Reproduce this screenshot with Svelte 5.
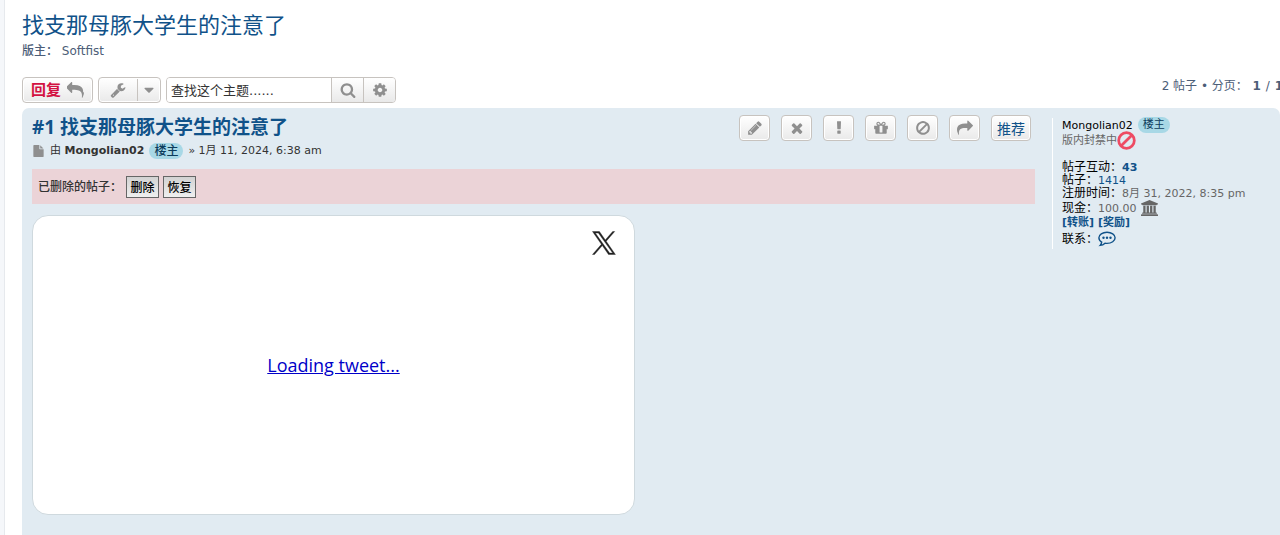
<script>
  const icons = {
    reply: 'M1792 1120q0 166-127 451-3 7-10.5 24t-13.5 30-13 22q-12 17-28 17-15 0-23.5-10t-8.5-25q0-9 2.5-26.5t2.5-23.5q5-68 5-123 0-112-19.5-200.5t-54-153.5-89-112-117.5-79.5-150.5-49.5-173-26.5-200.5-7.5h-224v256q0 26-19 45t-45 19-45-19l-512-512q-19-19-19-45t19-45l512-512q19-19 45-19t45 19 19 45v256h224q713 0 875 403 53 134 53 333z',
    wrench: 'M448 1472q0-26-19-45t-45-19-45 19-19 45 19 45 45 19 45-19 19-45zm644-420l-682 682q-37 37-90 37-52 0-91-37l-106-108q-38-36-38-90 0-53 38-91l681-681q39 98 114.5 173.5t173.5 114.5zm634-435q0 39-23 106-47 134-164.5 217.5t-258.5 83.5q-185 0-316.5-131.5t-131.5-316.5 131.5-316.5 316.5-131.5q58 0 121.5 16.5t107.5 46.5q16 11 16 28t-16 28l-293 169v224l193 107q5-3 79-48.5t135.5-81 70.5-35.5q15 0 23.5 10t8.5 25z',
    caret: 'M1408 704q0 26-19 45l-448 448q-19 19-45 19t-45-19l-448-448q-19-19-19-45t19-45 45-19h896q26 0 45 19t19 45z',
    search: 'M1216 832q0-185-131.5-316.5t-316.5-131.5-316.5 131.5-131.5 316.5 131.5 316.5 316.5 131.5 316.5-131.5 131.5-316.5zm512 832q0 52-38 90t-90 38q-54 0-90-38l-343-342q-179 124-399 124-143 0-273.5-55.5t-225-150-150-225-55.5-273.5 55.5-273.5 150-225 225-150 273.5-55.5 273.5 55.5 225 150 150 225 55.5 273.5q0 220-124 399l343 343q37 37 37 90z',
    cog: 'M1152 896q0-106-75-181t-181-75-181 75-75 181 75 181 181 75 181-75 75-181zm512-109v222q0 12-8 23t-20 13l-185 28q-19 54-39 91 35 50 107 138 10 12 10 25t-9 23q-27 37-99 108t-94 71q-12 0-26-9l-138-108q-44 23-91 38-16 136-29 186-7 28-36 28h-222q-14 0-24.5-8.5t-11.5-21.5l-28-184q-49-16-90-37l-141 107q-10 9-25 9-14 0-25-11-126-114-165-168-7-10-7-23 0-12 8-23 15-21 51-66.5t54-70.5q-27-50-41-99l-183-27q-13-2-21-12.5t-8-23.5v-222q0-12 8-23t19-13l186-28q14-46 39-92-40-57-107-138-10-12-10-24 0-10 9-23 26-36 98.5-107.5t94.5-71.5q13 0 26 10l138 107q44-23 91-38 16-136 29-186 7-28 36-28h222q14 0 24.5 8.5t11.5 21.5l28 184q49 16 90 37l142-107q9-9 24-9 13 0 25 10 129 119 165 170 7 8 7 22 0 12-8 23-15 21-51 66.5t-54 70.5q26 50 41 98l183 28q13 2 21 12.5t8 23.5z',
    pencil: 'M491 1536l91-91-235-235-91 91v107h128v128h107zm523-928q0-22-22-22-10 0-17 7l-542 542q-7 7-7 17 0 22 22 22 10 0 17-7l542-542q7-7 7-17zm-54-192l416 416-832 832h-416v-416zm683 96q0 53-37 90l-166 166-416-416 166-165q36-38 90-38 53 0 91 38l235 234q37 39 37 91z',
    times: 'M1490 1322q0 40-28 68l-136 136q-28 28-68 28t-68-28l-294-294-294 294q-28 28-68 28t-68-28l-136-136q-28-28-28-68t28-68l294-294-294-294q-28-28-28-68t28-68l136-136q28-28 68-28t68 28l294 294 294-294q28-28 68-28t68 28l136 136q28 28 28 68t-28 68l-294 294 294 294q28 28 28 68z',
    exclamation: 'M1088 1248v224q0 26-19 45t-45 19h-256q-26 0-45-19t-19-45v-224q0-26 19-45t45-19h256q26 0 45 19t19 45zm30-1056l-28 768q-1 26-20.5 45t-45.5 19h-256q-26 0-45.5-19t-20.5-45l-28-768q-1-26 17.5-45t44.5-19h320q26 0 44.5 19t17.5 45z',
    gift: 'M1056 1356v-716h-320v716q0 25 18 38.5t46 13.5h192q28 0 46-13.5t18-38.5zm-456-844h195l-126-161q-26-31-69-31-40 0-68 28t-28 68 28 68 68 28zm688-96q0-40-28-68t-68-28q-43 0-69 31l-125 161h194q40 0 68-28t28-68zm376 256v320q0 14-9 23t-23 9h-96v416q0 40-28 68t-68 28h-1088q-40 0-68-28t-28-68v-416h-96q-14 0-23-9t-9-23v-320q0-14 9-23t23-9h440q-93 0-158.5-65.5t-65.5-158.5 65.5-158.5 158.5-65.5q107 0 168 77l128 165 128-165q61-77 168-77 93 0 158.5 65.5t65.5 158.5-65.5 158.5-158.5 65.5h440q14 0 23 9t9 23z',
    ban: 'M1440 893q0-161-87-295l-754 753q137 89 297 89 111 0 211.5-43.5t173.5-116.5 116-174.5 43-212.5zm-999 299l755-754q-135-91-300-91-148 0-273 73t-198 199-73 274q0 162 89 299zm1223-299q0 157-61 300t-163.5 246-245 164-298.5 61-298.5-61-245-164-163.5-246-61-300 61-299.5 163.5-245.5 245-164 298.5-61 298.5 61 245 164 163.5 245.5 61 299.5z',
    share: 'M1792 640q0 26-19 45l-512 512q-19 19-45 19t-45-19-19-45v-256h-224q-98 0-175.5 6t-154 21.5-133 42.5-105.5 69.5-80 101-48.5 138.5-17.5 181q0 55 5 123 0 6 2.5 23.5t2.5 26.5q0 15-8.5 25t-23.5 10q-16 0-28-17-7-9-13-22t-13.5-30-10.5-24q-127-285-127-451 0-199 53-333 162-403 875-403h224v-256q0-26 19-45t45-19 45 19l512 512q19 19 19 45z',
    file: 'M1152 512v-472q22 14 36 28l408 408q14 14 28 36h-472zm-128 32q0 40 28 68t68 28h544v1056q0 40-28 68t-68 28h-1344q-40 0-68-28t-28-68v-1600q0-40 28-68t68-28h800v544z'
  };

  const postButtons = [
    { icon: 'pencil', title: '编辑帖子' },
    { icon: 'times', title: '删除帖子' },
    { icon: 'exclamation', title: '举报帖子' },
    { icon: 'gift', title: '奖励' },
    { icon: 'ban', title: '封禁' },
    { icon: 'share', title: '引用' }
  ];

  let query = $state('');
</script>

{#snippet icon(name)}
  <svg class="icon" viewBox="0 0 1792 1792" aria-hidden="true"><path d={icons[name]} /></svg>
{/snippet}

<div class="wrap">
  <h2><a href="#topic">找支那母豚大学生的注意了</a></h2>
  <p class="moderators"><strong>版主：</strong> <a href="#softfist">Softfist</a></p>

  <div class="action-bar">
    <button class="button reply">回复 {@render icon('reply')}</button>
    <button class="button tools" aria-label="主题工具">
      <span class="tool-icon">{@render icon('wrench')}</span>
      <span class="caret">{@render icon('caret')}</span>
    </button>
    <form class="search-box" onsubmit={(e) => e.preventDefault()}>
      <input type="search" placeholder="查找这个主题......" aria-label="查找这个主题" bind:value={query} />
      <button class="search-button" aria-label="搜索">{@render icon('search')}</button>
      <button class="search-button cog" type="button" aria-label="高级搜索">{@render icon('cog')}</button>
    </form>
    <div class="pagination">2 帖子 • 分页： <strong>1</strong> / <strong>1</strong></div>
  </div>

  <article class="post">
    <div class="postbody">
      <header>
        <div class="heading">
          <h3><a href="#p1">#1 找支那母豚大学生的注意了</a></h3>
          <p class="author">
            {@render icon('file')}
            <span>由 <strong>Mongolian02</strong></span>
            <span class="op">楼主</span>
            <span>» 1月 11, 2024, 6:38 am</span>
          </p>
        </div>
        <div class="post-buttons">
          {#each postButtons as item}
            <button class="button" aria-label={item.title}>{@render icon(item.icon)}</button>
          {/each}
          <button class="button recommend">推荐</button>
        </div>
      </header>

      <div class="deleted">
        <strong>已删除的帖子：</strong>
        <button>删除</button>
        <button>恢复</button>
      </div>

      <div class="tweet">
        <svg class="x-logo" viewBox="0 0 24 24" aria-hidden="true">
          <path d="M14.2 10.2 22.7 0.5h-2l-7.4 8.4L7.4 0.5H0.5l8.9 12.8L0.5 23.5h2l7.8-8.9 6.2 8.9h6.9zM3.3 2h3.1l14.3 20.1h-3.1z" />
        </svg>
        <a href="#tweet">Loading tweet...</a>
      </div>
    </div>

    <aside class="profile">
      <div class="user"><a href="#user">Mongolian02</a> <span class="op">楼主</span></div>
      <div class="rank">
        版内封禁中
        <svg viewBox="0 0 18 18" aria-hidden="true">
          <circle cx="9" cy="9" r="7.4" />
          <path d="M4 14 14 4" />
        </svg>
      </div>
      <dl>
        <div><dt>帖子互动：</dt><dd><a href="#likes"><strong>43</strong></a></dd></div>
        <div><dt>帖子：</dt><dd><a href="#posts">1414</a></dd></div>
        <div><dt>注册时间：</dt><dd>8月 31, 2022, 8:35 pm</dd></div>
        <div class="cash">
          <dt>现金：</dt>
          <dd>
            100.00
            <svg viewBox="0 0 1920 1792" aria-hidden="true">
              <path d="M960 0l960 384v128h-128q0 26-20.5 45t-48.5 19h-1526q-28 0-48.5-19t-20.5-45h-128v-128zm-704 640h256v768h128v-768h256v768h128v-768h256v768h128v-768h256v768h59q28 0 48.5 19t20.5 45v64h-1664v-64q0-26 20.5-45t48.5-19h59v-768zm1595 960q28 0 48.5 19t20.5 45v128h-1920v-128q0-26 20.5-45t48.5-19h1782z" />
            </svg>
          </dd>
        </div>
        <div class="transfer"><a href="#transfer">[转账]</a><a href="#reward">[奖励]</a></div>
        <div class="contact">
          <dt>联系：</dt>
          <dd>
            <a href="#contact" aria-label="联系 Mongolian02">
              <svg viewBox="0 0 18 16" aria-hidden="true">
                <path class="bubble" d="M9 1.2c4.5 0 8.1 2.5 8.1 5.6s-3.6 5.6-8.1 5.6c-.7 0-1.4-.1-2-.2-1.3 1.2-2.9 2-4.8 2.2.8-.9 1.3-1.9 1.5-3.2C2 10.2.9 8.600.9 6.800c0-3.100 3.600-5.600 8.100-5.600z" />
                <circle cx="5.5" cy="6.8" r="1.2" />
                <circle cx="9" cy="6.8" r="1.2" />
                <circle cx="12.5" cy="6.8" r="1.2" />
              </svg>
            </a>
          </dd>
        </div>
      </dl>
    </aside>
  </article>
</div>

<style>
  :global(body) {
    margin: 0;
    background: #f5f7fa;
  }

  .wrap {
    display: flex;
    flex-direction: column;
    box-sizing: border-box;
    min-height: 100vh;
    margin-left: 4px;
    padding: 10px 0 0 17px;
    overflow: hidden;
    background: #fff;
    border-left: 1px solid #e6e9ed;
    color: #4c5d77;
    font: 12px/18px 'DejaVu Sans', 'Noto Sans CJK SC', sans-serif;
  }

  h2,
  h3,
  p,
  dl,
  dd {
    margin: 0;
  }

  a {
    color: #105289;
    text-decoration: none;
  }

  a:hover {
    color: #d31141;
    text-decoration: underline;
  }

  button,
  input {
    font-family: inherit;
  }

  button {
    cursor: pointer;
  }

  .icon {
    display: block;
    flex-shrink: 0;
    width: 16px;
    height: 16px;
    fill: #8f8f8f;
  }

  h2 {
    font: 400 22px/28px 'Noto Sans', 'Noto Sans CJK SC', sans-serif;
  }

  .moderators {
    margin-top: 4px;
  }

  .moderators strong {
    font-weight: 500;
  }

  .moderators a {
    color: #4c5d77;
  }

  /* Action bar */
  .action-bar {
    display: flex;
    gap: 5px;
    margin: 17px 0 5px;
  }

  .button {
    display: flex;
    align-items: center;
    justify-content: center;
    box-sizing: border-box;
    height: 26px;
    padding: 0 8px;
    background: linear-gradient(#fff, #e9e9e9);
    border: 1px solid #c7c3bf;
    border-radius: 4px;
    box-shadow: inset 0 0 0 1px #fff;
  }

  .reply {
    gap: 6px;
    color: #d31141;
    font-size: 15px;
    font-weight: 700;
    line-height: 20px;
  }

  .reply .icon {
    width: 17px;
    height: 17px;
  }

  .tools {
    padding: 0;
  }

  .tool-icon {
    padding: 0 11px;
  }

  .caret {
    padding: 3px 3px;
    border-left: 1px solid #c7c3bf;
  }

  .search-box {
    display: flex;
    box-sizing: border-box;
    height: 26px;
    overflow: hidden;
    border: 1px solid #c7c3bf;
    border-radius: 4px;
  }

  .search-box input {
    box-sizing: border-box;
    width: 164px;
    padding: 0 4px;
    border: 0;
    color: #333;
    font-size: 13px;
  }

  .search-box input::placeholder {
    color: #333;
    opacity: 1;
  }

  .search-button {
    display: flex;
    align-items: center;
    justify-content: center;
    box-sizing: border-box;
    width: 32px;
    padding: 0;
    background: linear-gradient(#fff, #e9e9e9);
    border: 0;
    border-left: 1px solid #c7c3bf;
  }

  .pagination {
    margin-left: auto;
    margin-right: -4px;
    white-space: nowrap;
  }

  .pagination strong {
    margin: 0 1px;
  }

  /* Post */
  .post {
    display: flex;
    flex: 1;
    align-items: flex-start;
    gap: 17px;
    padding: 7px 0 20px 10px;
    background: #e1ebf2;
    border-radius: 7px 7px 0 0;
  }

  .postbody {
    flex: 1;
    min-width: 0;
  }

  header {
    display: flex;
    justify-content: space-between;
    padding-right: 4px;
  }

  h3 {
    font: 700 19px/24px 'Noto Sans', 'Noto Sans CJK SC', sans-serif;
  }

  .author {
    display: flex;
    align-items: center;
    gap: 5px;
    margin-top: 3px;
    color: #333;
    font-size: 11px;
  }

  .author .icon {
    width: 13px;
    height: 12px;
  }

  .op {
    padding: 0 5px;
    background: #a8d8e6;
    border-radius: 8px;
    color: #0c3c5c;
    font-size: 11px;
    line-height: 16px;
  }

  .author .op {
    font-size: 12px;
    font-weight: 500;
  }

  .post-buttons {
    display: flex;
    gap: 11px;
  }

  .post-buttons .button {
    width: 31px;
    padding: 0;
  }

  .post-buttons .recommend {
    width: 40px;
    color: #105289;
    font-size: 14px;
  }

  .deleted {
    display: flex;
    align-items: center;
    gap: 4px;
    box-sizing: border-box;
    height: 35px;
    margin-top: 9px;
    padding: 0 6px;
    background: #ebd3d7;
    color: #333;
  }

  .deleted strong {
    font-weight: 500;
  }

  .deleted button {
    box-sizing: border-box;
    width: 33px;
    height: 22px;
    padding: 0;
    background: linear-gradient(#d2d2d2, #efefef);
    border: 1px solid #666;
    color: #000;
    font-size: 12px;
    font-weight: 500;
  }

  .tweet {
    display: flex;
    align-items: center;
    justify-content: center;
    position: relative;
    box-sizing: border-box;
    max-width: 603px;
    height: 300px;
    margin-top: 11px;
    background: #fff;
    border: 1px solid #cfd9de;
    border-radius: 16px;
    font: 18px/24px 'Open Sans', 'Noto Sans', sans-serif;
  }

  .tweet a {
    color: #0000c8;
    text-decoration: underline;
  }

  .x-logo {
    position: absolute;
    top: 15px;
    right: 18px;
    width: 24px;
    height: 24px;
    fill: #222;
    stroke: #222;
    stroke-width: 0.4;
  }

  /* Poster profile */
  .profile {
    box-sizing: border-box;
    width: 228px;
    margin-top: 3px;
    padding-left: 9px;
    border-left: 1px solid #fff;
    color: #666;
    font-size: 11px;
    line-height: 13px;
    white-space: nowrap;
  }

  .user {
    display: flex;
    align-items: center;
    gap: 5px;
    height: 14px;
  }

  .user a {
    color: #000;
  }

  .rank {
    display: flex;
    align-items: center;
    height: 16px;
    margin-bottom: 13px;
  }

  .rank svg {
    width: 19px;
    height: 19px;
    fill: none;
    stroke: #ee4b63;
    stroke-width: 2.6;
  }

  dl > div {
    display: flex;
    align-items: center;
    height: 13px;
  }

  dt {
    color: #000;
    font-size: 12px;
  }

  dd {
    display: flex;
    align-items: center;
    gap: 4px;
  }

  dl .cash {
    height: 16px;
  }

  .cash svg {
    width: 17px;
    height: 16px;
    fill: #666;
  }

  .transfer {
    gap: 4px;
    font-weight: 700;
  }

  dl .contact {
    height: 20px;
  }

  .contact svg {
    display: block;
    width: 18px;
    height: 16px;
    fill: #105289;
  }

  .contact .bubble {
    fill: none;
    stroke: #105289;
    stroke-width: 1.4;
  }
</style>
